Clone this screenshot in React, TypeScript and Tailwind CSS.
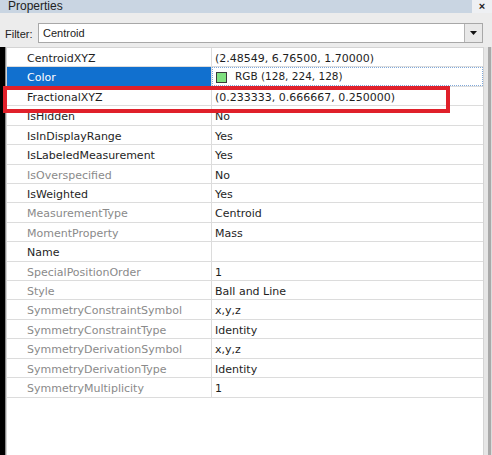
import React from "react";

type Prop = {
  name: string;
  value: string;
  readOnly?: boolean;
  color?: boolean;
};

const props: Prop[] = [
  { name: "CentroidXYZ", value: "(2.48549, 6.76500, 1.70000)" },
  { name: "Color", value: "RGB (128, 224, 128)", color: true },
  { name: "FractionalXYZ", value: "(0.233333, 0.666667, 0.250000)" },
  { name: "IsHidden", value: "No" },
  { name: "IsInDisplayRange", value: "Yes" },
  { name: "IsLabeledMeasurement", value: "Yes" },
  { name: "IsOverspecified", value: "No", readOnly: true },
  { name: "IsWeighted", value: "Yes" },
  { name: "MeasurementType", value: "Centroid", readOnly: true },
  { name: "MomentProperty", value: "Mass", readOnly: true },
  { name: "Name", value: "" },
  { name: "SpecialPositionOrder", value: "1", readOnly: true },
  { name: "Style", value: "Ball and Line", readOnly: true },
  { name: "SymmetryConstraintSymbol", value: "x,y,z", readOnly: true },
  { name: "SymmetryConstraintType", value: "Identity", readOnly: true },
  { name: "SymmetryDerivationSymbol", value: "x,y,z", readOnly: true },
  { name: "SymmetryDerivationType", value: "Identity", readOnly: true },
  { name: "SymmetryMultiplicity", value: "1", readOnly: true },
];

function Row({ p }: { p: Prop }) {
  if (p.color) {
    return (
      <div className="flex h-[19.43px] border-b border-[#dcdcdc]">
        <div className="w-[205px] shrink-0 border-r border-[#dcdcdc] bg-[#1170cf] pl-[20px] pt-[2px] leading-[17px] text-white">
          {p.name}
        </div>
        <div className="flex flex-1 items-center border border-dotted border-[#7fa8da] pl-[3px] pt-[1px]">
          <span className="h-[11px] w-[11px] border border-[#3a3a3a] bg-[rgb(128,224,128)]" />
          <span className="ml-[8px] text-[10.5px] text-[#1e1e1e]">{p.value}</span>
        </div>
      </div>
    );
  }
  const tone = p.readOnly ? "text-[#8a8a8a]" : "text-[#1e1e1e]";
  return (
    <div className="flex h-[19.43px] border-b border-[#dcdcdc] leading-[17px]">
      <div className={`w-[205px] shrink-0 border-r border-[#dcdcdc] pl-[20px] pt-[2px] ${tone}`}>
        {p.name}
      </div>
      <div className="flex-1 pl-[3px] pt-[2px] text-[#1e1e1e]">{p.value}</div>
    </div>
  );
}

export default function App() {
  return (
    <div className="relative flex h-[455px] w-[492px] flex-col overflow-hidden bg-[#ececec]">
      {/* title bar */}
      <div className="flex h-[13px] shrink-0 font-['Liberation_Sans',Arial,sans-serif] text-[12px]">
        <div className="flex-1 bg-[#c9d5e2] pl-[8px] leading-[12px] text-[#222]">Properties</div>
        <div className="flex w-[20px] items-center justify-center bg-[#eef0f3] text-[11px] font-bold leading-none text-[#222]">
          ×
        </div>
      </div>

      {/* filter */}
      <div className="flex h-[34px] shrink-0 items-start pt-[10px] font-['Liberation_Sans',Arial,sans-serif] text-[11px] text-[#222]">
        <div className="w-[38px] pl-[5px] pt-[5px] leading-[12px]">Filter:</div>
        <div className="mr-[9px] flex h-[20px] flex-1 border border-[#a8a8a8] bg-white">
          <div className="flex-1 pl-[4px] pt-[3px] leading-[12px]">Centroid</div>
          <div className="flex w-[18px] items-center justify-center border-l border-[#b4b4b4] bg-[#e8e8e8]">
            <svg width="7" height="4" viewBox="0 0 7 4">
              <path d="M0 0h7L3.5 4z" fill="#111" />
            </svg>
          </div>
        </div>
      </div>

      {/* grid */}
      <div className="flex flex-1">
        <div className="w-[5px] bg-black" />
        <div className="w-[1px] bg-[#8c8c8c]" />
        <div className="flex-1 border-l border-r border-t border-[#d4d4d4] bg-white font-['DejaVu_Sans',Verdana,sans-serif] text-[11px]">
          {props.map((p) => (
            <Row key={p.name} p={p} />
          ))}
        </div>
        <div className="w-[4px] bg-[#e6e6e6]" />
        <div className="w-[3px] bg-[#a9a9a9]" />
        <div className="w-[1px] bg-[#dcdcdc]" />
      </div>

      {/* highlight frame over FractionalXYZ */}
      <div className="absolute left-[3px] top-[86px] h-[27px] w-[447px] border-4 border-[#e0202a]" />
    </div>
  );
}
